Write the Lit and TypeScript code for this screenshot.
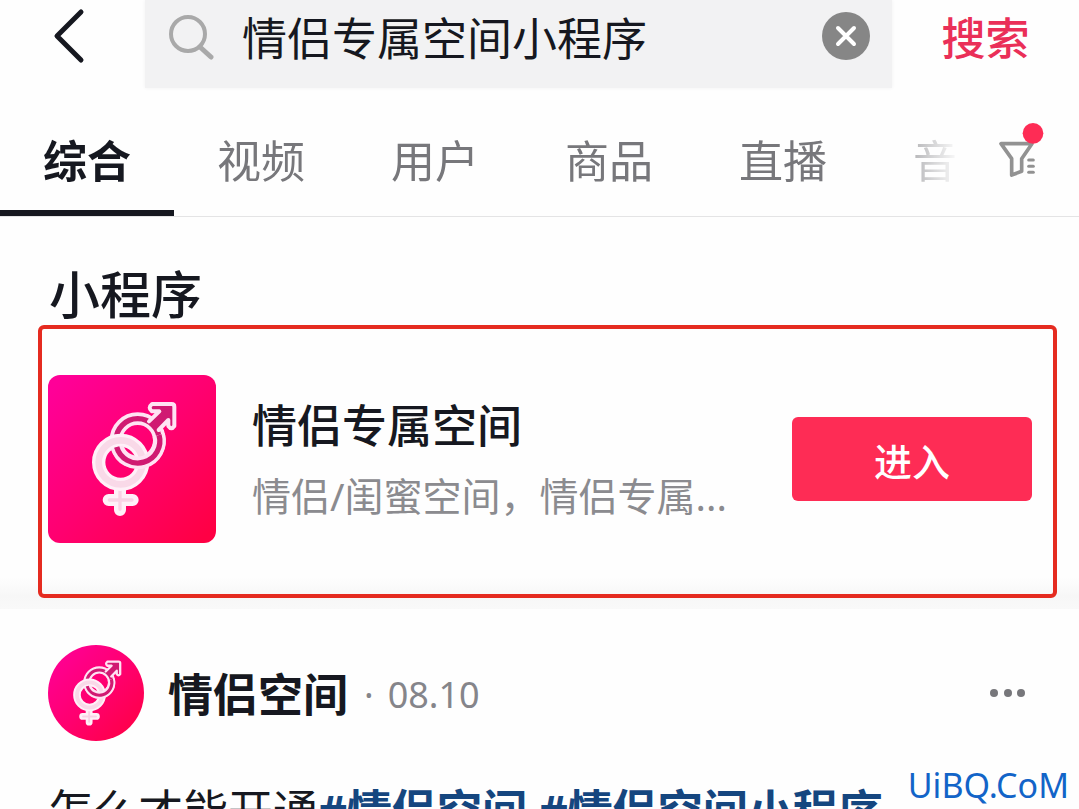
import { LitElement, html, css, svg } from "lit";
import { customElement, property, state } from "lit/decorators.js";
import { classMap } from "lit/directives/class-map.js";

@customElement("couple-logo")
class CoupleLogo extends LitElement {
  @property({ type: Boolean, reflect: true }) round = false;

  static styles = css`
    :host {
      display: block;
      flex: none;
      width: 168px;
      height: 168px;
      border-radius: 12px;
      overflow: hidden;
      background: linear-gradient(135deg, #ff0098 5%, #ff0070 50%, #ff0044 95%);
    }
    :host([round]) {
      width: 96px;
      height: 96px;
      border-radius: 50%;
    }
    .art {
      display: block;
      width: 100%;
      height: 100%;
    }
  `;

  render() {
    return html`
      <svg class="art" viewBox="54 45 504 504" fill="none" stroke-linecap="round" stroke-linejoin="round" aria-hidden="true">
        <circle cx="323" cy="241" r="65" stroke="#ffe3f3" stroke-width="38" />
        <circle cx="323" cy="241" r="65" stroke="#d01a72" stroke-width="16" />
        <path d="M270 385V450M236 420H308" stroke="#fff0f8" stroke-width="36" />
        <path d="M270 385V448M238 420H306" stroke="#f9d3e5" stroke-width="10" />
        <circle cx="272" cy="307" r="66" stroke="#fff0f8" stroke-width="40" />
        <circle cx="272" cy="307" r="66" stroke="#f9d9e8" stroke-width="20" />
        <path d="M386 225A65 65 0 0 1 261 262" stroke="#ffe3f3" stroke-width="38" stroke-linecap="butt" />
        <path d="M387 225A65 65 0 0 1 260 261" stroke="#d01a72" stroke-width="16" stroke-linecap="butt" />
        <path
          d="M357 184L388 154H366Q352 143 366 132H425Q433 132 433 140V198Q424 211 415 198V180L386 210"
          fill="#d01a72"
          stroke="#ffe3f3"
          stroke-width="12"
        />
      </svg>
    `;
  }
}

@customElement("app-root")
class AppRoot extends LitElement {
  @state() private query = "情侣专属空间小程序";
  @state() private active = 0;

  private tabs = ["综合", "视频", "用户", "商品", "直播", "音乐"];

  static styles = css`
    :host {
      display: block;
      position: relative;
      height: 100vh;
      overflow: hidden;
      background: #fefefe;
      color: #161820;
      font-family: "Noto Sans", "Noto Sans CJK SC", sans-serif;
      font-size: 45px;
      line-height: 60px;
    }
    * {
      box-sizing: border-box;
    }
    button,
    input {
      margin: 0;
      padding: 0;
      border: 0;
      background: none;
      color: inherit;
      font: inherit;
    }
    svg {
      display: block;
    }
    h1,
    h2,
    p {
      margin: 0;
      font-size: 45px;
      font-weight: 400;
    }
    a {
      color: #15467f;
      font-weight: 700;
      text-decoration: none;
    }

    .top {
      display: flex;
      height: 88px;
    }
    .back {
      width: 145px;
      padding: 0 0 16px 48px;
    }
    .field {
      flex: 1;
      min-width: 0;
      display: flex;
      align-items: center;
      padding: 0 22px 16px 24px;
      background: #f2f2f3;
      box-shadow: 0 0 4px #f2f2f3;
    }
    .query {
      flex: 1;
      min-width: 0;
      height: 64px;
      margin-left: 27px;
      outline: 0;
    }
    .submit {
      width: 187px;
      padding-bottom: 12px;
      color: #ea2f58;
      font-size: 44px;
      font-weight: 500;
    }

    .nav {
      display: flex;
      height: 129px;
      border-bottom: 1px solid #e4e4e5;
    }
    .tabs {
      flex: 1;
      min-width: 0;
      display: flex;
      overflow: hidden;
      mask-image: linear-gradient(to left, transparent, #000 90px);
    }
    .tab {
      flex: none;
      width: 174px;
      padding-top: 24px;
      border-bottom: 6px solid transparent;
      color: #77777b;
      font-size: 44px;
    }
    .tab.on {
      border-color: #161820;
      color: #161820;
      font-weight: 700;
    }
    .filter {
      align-self: flex-start;
      width: 119px;
      padding: 32px 0 0 36px;
    }

    .apps {
      padding: 46px 22px 11px 38px;
      background: linear-gradient(#fefefe, #f7f7f7 60%, #f9f9f9) bottom / 100% 32px no-repeat;
    }
    .heading {
      padding-left: 11px;
      font-size: 51px;
      font-weight: 500;
      line-height: 62px;
    }
    .card {
      display: flex;
      align-items: center;
      height: 273px;
      padding: 0 21px 6px 6px;
      border: 4px solid #e52b20;
      border-radius: 6px;
    }
    .info {
      flex: 1;
      min-width: 0;
      padding: 4px 40px 0 36px;
    }
    .title {
      font-weight: 500;
    }
    .desc {
      margin-top: 10px;
      color: #8b8b8f;
      font-size: 39px;
    }
    .enter {
      width: 240px;
      height: 84px;
      padding-top: 4px;
      border-radius: 6px;
      background: #fe2c55;
      color: #fff;
      font-size: 38px;
      font-weight: 500;
    }

    .post {
      padding: 36px 48px 0;
    }
    .author {
      display: flex;
      align-items: center;
      height: 96px;
    }
    .name,
    .dot,
    .date {
      padding-top: 4px;
    }
    .name {
      margin-left: 24px;
      font-weight: 700;
    }
    .dot,
    .date {
      color: #85858a;
      font-size: 36px;
    }
    .dot {
      margin: 0 14px 0 16px;
    }
    .date {
      flex: 1;
    }
    .text {
      margin-top: 40px;
      white-space: nowrap;
    }
    .mark {
      position: absolute;
      right: 10px;
      bottom: 0;
      color: #1264c8;
      font-size: 34px;
      line-height: 48px;
    }
  `;

  private onInput(e: Event) {
    this.query = (e.target as HTMLInputElement).value;
  }

  private dash(y: number) {
    return svg`<path d="M208 ${y}H222" stroke-width="9" />`;
  }

  render() {
    return html`
      <header class="top">
        <button class="back" aria-label="返回">
          <svg width="40" height="72" viewBox="0 0 40 72" fill="none" stroke="#161820" stroke-width="5" stroke-linecap="round" stroke-linejoin="round">
            <path d="M33 12L9 36L33 60" />
          </svg>
        </button>
        <div class="field">
          <svg width="46" height="48" viewBox="0 0 46 48" fill="none" stroke="#a9a9a9" stroke-width="4" stroke-linecap="round">
            <circle cx="19" cy="22" r="17" />
            <path d="M31 35L42 45" stroke-width="5" />
          </svg>
          <input class="query" aria-label="搜索内容" .value=${this.query} @input=${this.onInput} />
          <button aria-label="清除" @click=${() => (this.query = "")}>
            <svg width="48" height="48" viewBox="0 0 48 48">
              <circle cx="24" cy="24" r="24" fill="#868686" />
              <path d="M16 16L32 32M32 16L16 32" stroke="#fff" stroke-width="4" stroke-linecap="round" />
            </svg>
          </button>
        </div>
        <button class="submit">搜索</button>
      </header>

      <nav class="nav">
        <div class="tabs">
          ${this.tabs.map(
            (t, i) => html`<button class=${classMap({ tab: true, on: i === this.active })} @click=${() => (this.active = i)}>${t}</button>`
          )}
        </div>
        <button class="filter" aria-label="筛选">
          <svg width="50" height="60" viewBox="110 30 150 180" fill="none" stroke="#929292" stroke-width="11" stroke-linecap="round" stroke-linejoin="round">
            <path d="M125 101H218L187 146V184L157 195V146Z" />
            ${[150, 169, 187].map((y) => this.dash(y))}
            <circle cx="221" cy="70" r="31" fill="#fe2c55" stroke="none" />
          </svg>
        </button>
      </nav>

      <section class="apps">
        <h1 class="heading">小程序</h1>
        <article class="card">
          <couple-logo></couple-logo>
          <div class="info">
            <h2 class="title">情侣专属空间</h2>
            <p class="desc">情侣/闺蜜空间，情侣专属...</p>
          </div>
          <button class="enter">进入</button>
        </article>
      </section>

      <article class="post">
        <div class="author">
          <couple-logo round></couple-logo>
          <span class="name">情侣空间</span>
          <span class="dot">·</span>
          <span class="date">08.10</span>
          <button aria-label="更多">
            <svg width="46" height="48" viewBox="0 0 46 48" fill="#77777b">
              <circle cx="9" cy="24" r="4" />
              <circle cx="23" cy="24" r="4" />
              <circle cx="36" cy="24" r="4" />
            </svg>
          </button>
        </div>
        <p class="text">怎么才能开通<a href="#couple">#情侣空间</a> <a href="#mini">#情侣空间小程序</a></p>
      </article>
      <div class="mark">UiBQ.CoM</div>
    `;
  }
}
